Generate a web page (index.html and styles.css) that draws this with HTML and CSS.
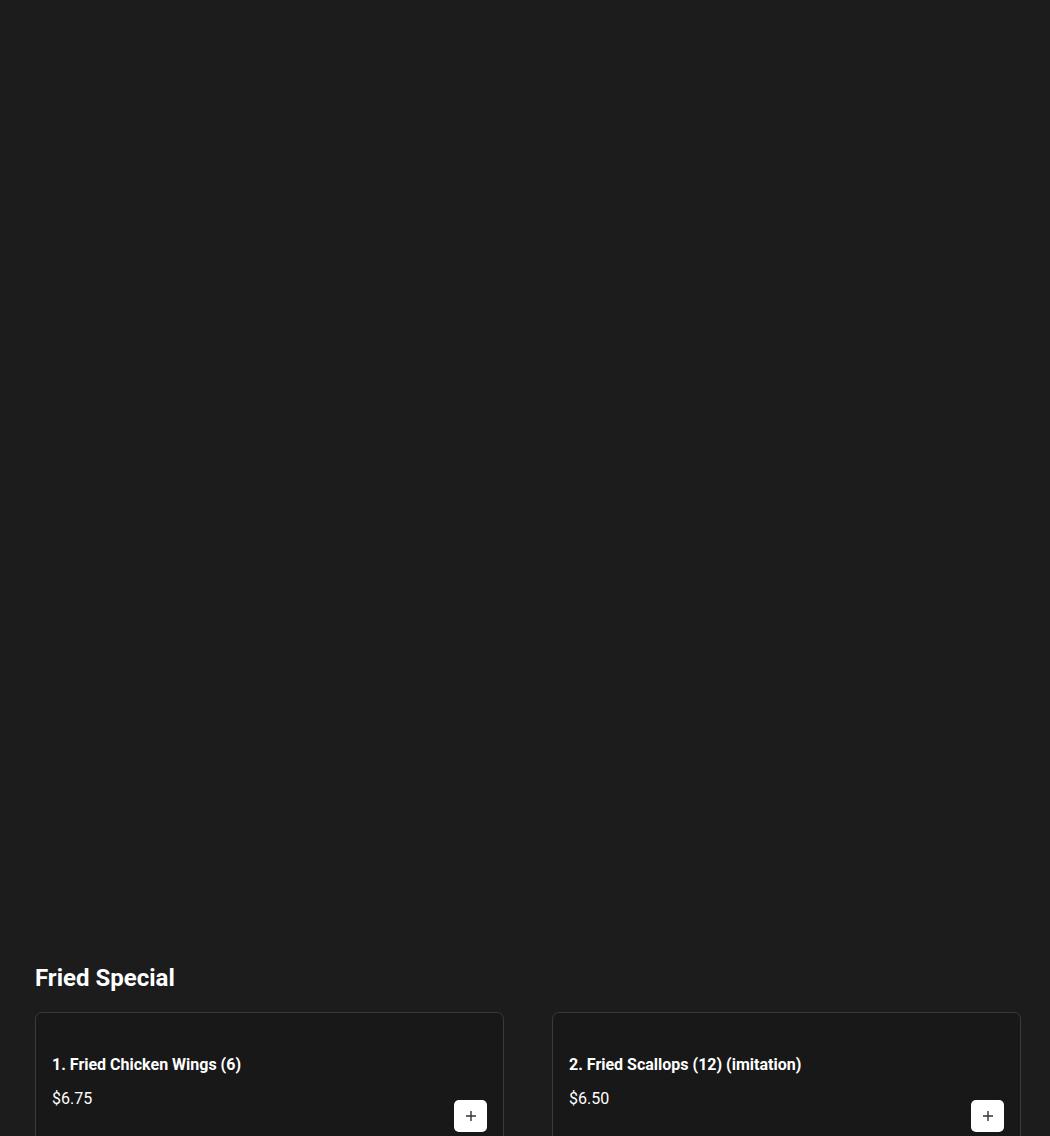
FILE: index.html
```html
<!DOCTYPE html>
<html lang="en">

<head>
    <meta charset="UTF-8">
    <meta name="viewport" content="width=device-width, initial-scale=1.0">
    <title>Menu</title>
    <link rel="stylesheet" href="styles.css">
</head>

<body>
    <div class="hero"></div>

    <section class="category">
        <h2>Fried Special</h2>
        <div class="items">
            <div class="item">
                <div class="item-info">
                    <h3>1. Fried Chicken Wings (6)</h3>
                    <p class="price">$6.75</p>
                </div>
                <button class="add-btn" aria-label="Add">
                    <svg width="12" height="12" viewBox="0 0 12 12"><path d="M6 1v10M1 6h10" stroke="#333" stroke-width="1.4" fill="none"/></svg>
                </button>
            </div>
            <div class="item">
                <div class="item-info">
                    <h3>2. Fried Scallops (12) (imitation)</h3>
                    <p class="price">$6.50</p>
                </div>
                <button class="add-btn" aria-label="Add">
                    <svg width="12" height="12" viewBox="0 0 12 12"><path d="M6 1v10M1 6h10" stroke="#333" stroke-width="1.4" fill="none"/></svg>
                </button>
            </div>
        </div>
    </section>
</body>

</html>
```

FILE: styles.css
```css
body {
    font-family: 'Roboto', 'Liberation Sans', sans-serif;
    margin: 0;
    padding: 0;
    background: #1c1c1c;
    color: #ffffff;
}

.hero {
    height: 963px;
}

.category {
    padding: 0 29px 0 35px;
}

.category h2 {
    font-size: 24px;
    font-weight: 700;
    margin: 0 0 19px;
    line-height: 30px;
}

.items {
    display: grid;
    grid-template-columns: 1fr 1fr;
    gap: 48px;
}

.item {
    background: #181818;
    border: 1px solid #3a3a3a;
    border-radius: 7px;
    padding: 41px 16px 16px;
    display: flex;
    justify-content: space-between;
    align-items: flex-start;
    min-height: 120px;
}

.item h3 {
    font-size: 16px;
    font-weight: 700;
    margin: 0 0 12px;
    line-height: 22px;
}

.price {
    font-size: 16px;
    margin: 0;
    line-height: 22px;
}

.add-btn {
    flex-shrink: 0;
    width: 33px;
    height: 32px;
    background: #ffffff;
    border: none;
    border-radius: 5px;
    display: flex;
    align-items: center;
    justify-content: center;
    padding: 0;
    margin-top: 46px;
    cursor: pointer;
}
```
